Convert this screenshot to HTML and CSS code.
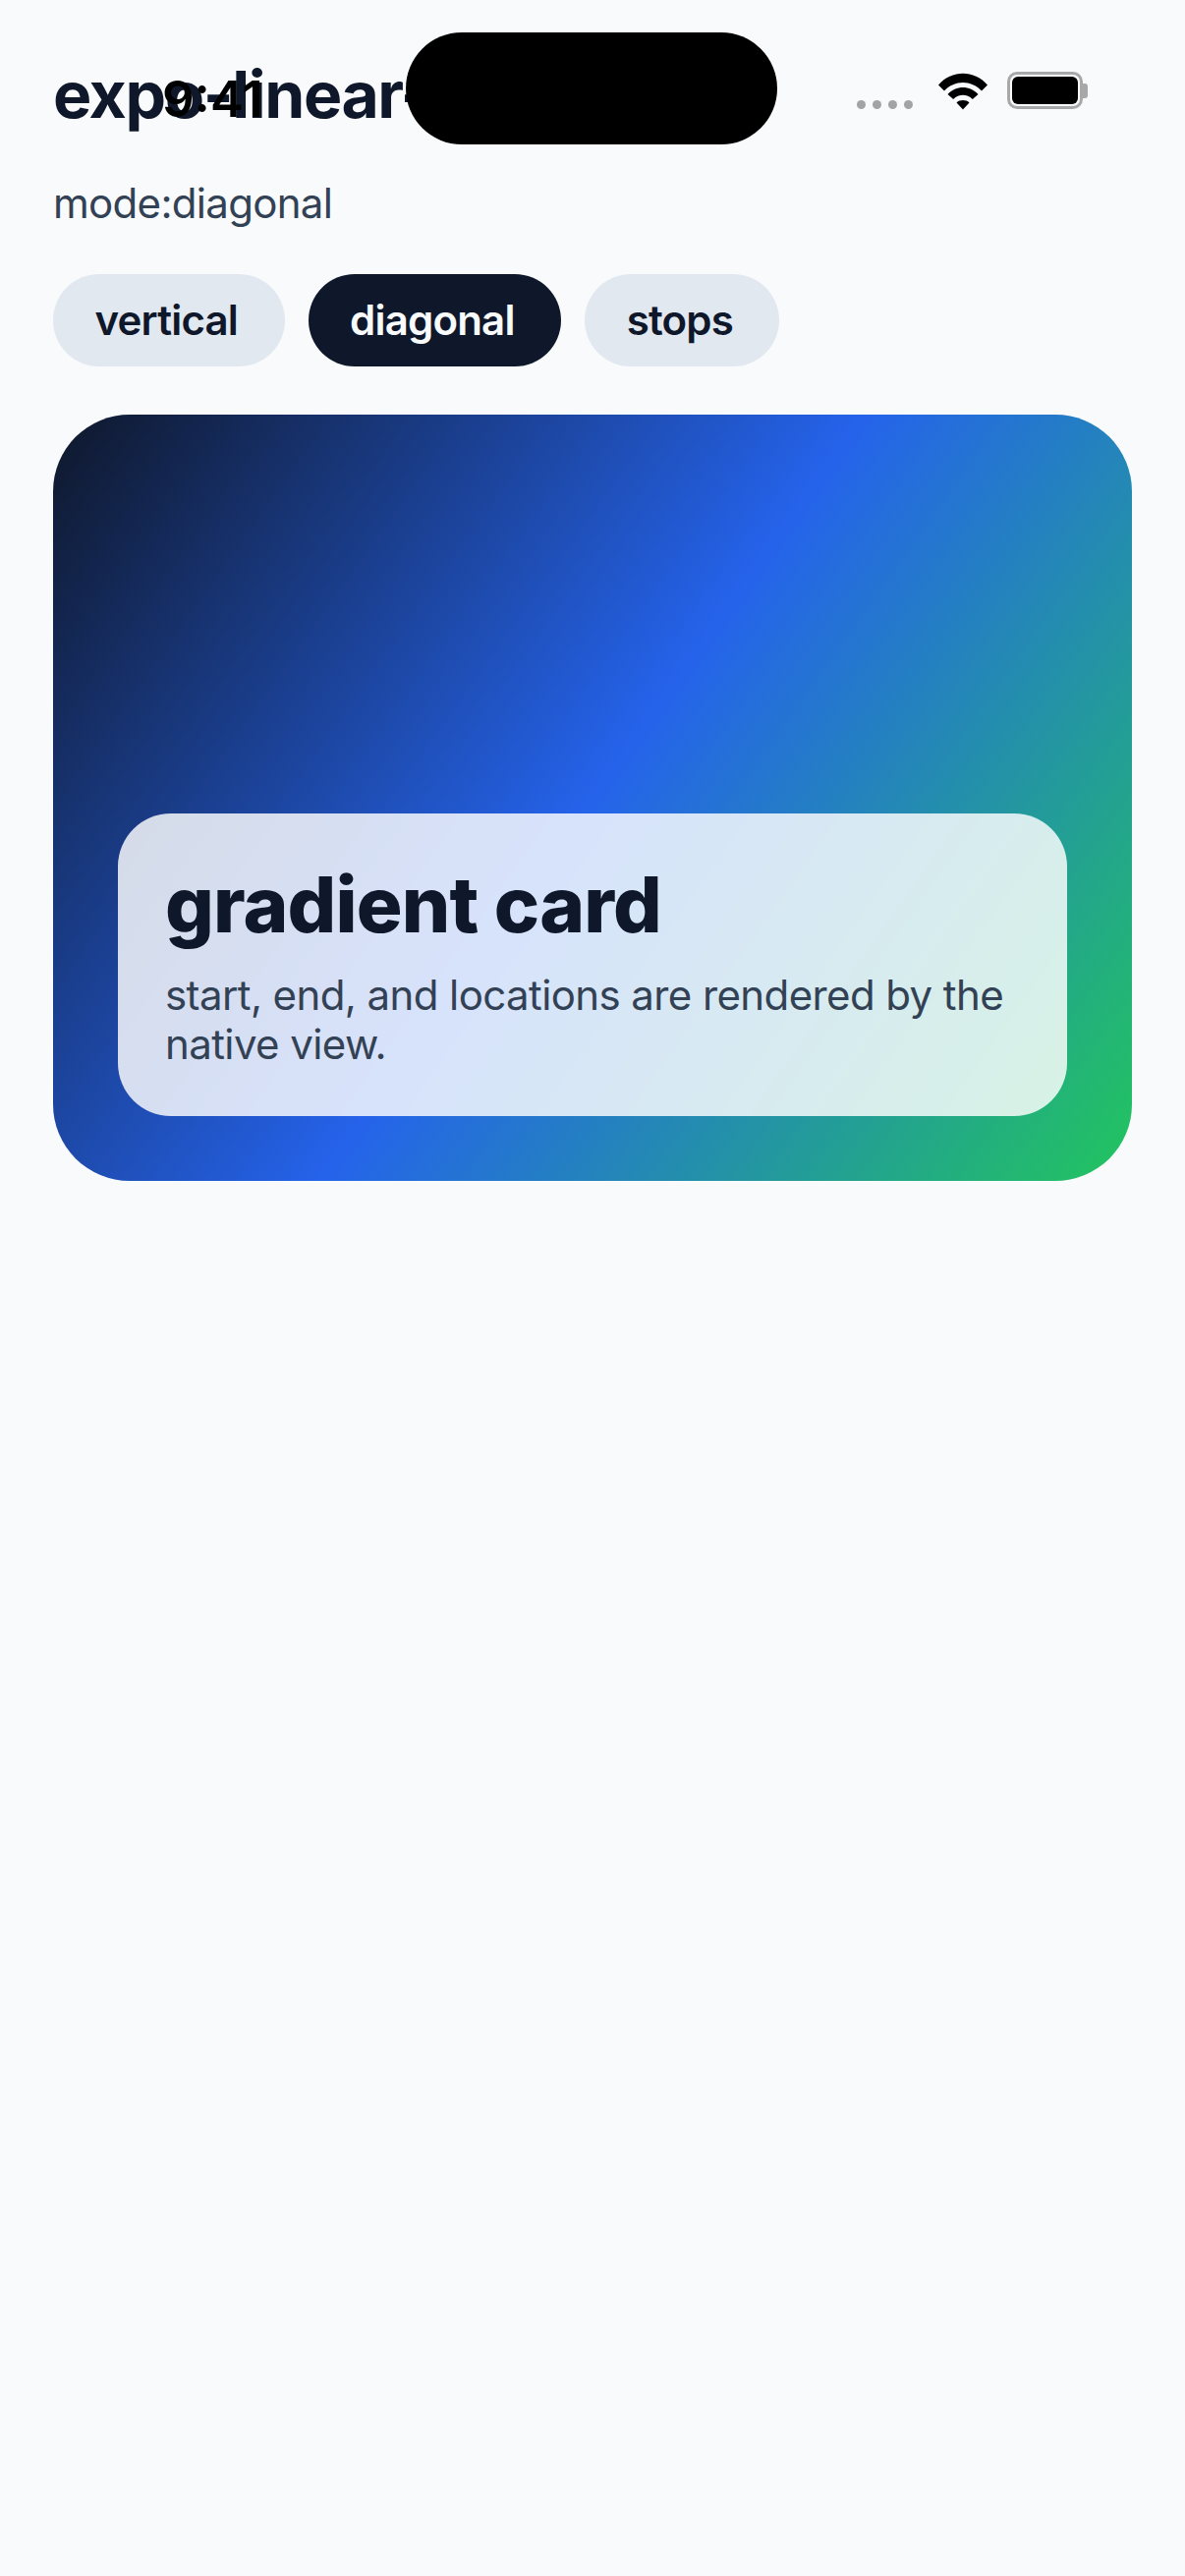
FILE: index.html
```html
<!DOCTYPE html>
<html lang="en">
<head>
<meta charset="utf-8">
<title>expo-linear-gradient</title>
<link rel="stylesheet" href="styles.css">
</head>
<body>
<div class="statusbar">
  <span class="time">9:41</span>
  <div class="island"></div>
  <div class="dots"><i></i><i></i><i></i><i></i></div>
  <svg class="wifi" width="50" height="38" viewBox="0 0 50 38">
    <path d="M0 12.500C13.500 -3.200 36.500 -3.200 50 12.500L44 18.500C33.500 7 16.500 7 6 18.500Z"/>
    <path d="M9.500 22C18 12.800 32 12.800 40.500 22L34.800 27C29 21.400 21 21.400 15.200 27Z"/>
    <path d="M18.500 30.500C22 27.300 28 27.300 31.500 30.500L25 37.500Z"/>
  </svg>
  <div class="battery"><div class="battery-fill"></div></div>
</div>
<main class="screen">
  <h1 class="title">expo-linear-gradient</h1>
  <p class="mode">mode:diagonal</p>
  <div class="pills">
    <span class="pill">vertical</span>
    <span class="pill pill-active">diagonal</span>
    <span class="pill">stops</span>
  </div>
  <section class="gradient">
    <div class="panel">
      <h2 class="panel-title">gradient card</h2>
      <p class="panel-text">start, end, and locations are rendered by the native view.</p>
    </div>
  </section>
</main>
</body>
</html>
```
FILE: styles.css
```css
* { box-sizing: border-box; }
html, body { margin: 0; height: 100%; }
body {
  background: #f8fafc;
  font-family: Inter, "Liberation Sans", sans-serif;
  position: relative;
  overflow: hidden;
}
.statusbar { position: absolute; inset: 0 0 auto 0; height: 160px; z-index: 2; }
.time {
  position: absolute; left: 165px; top: 71px;
  font-size: 51px; line-height: 60px; font-weight: 600; color: #000;
}
.island {
  position: absolute; left: 413px; top: 33px;
  width: 378px; height: 114px; border-radius: 57px; background: #000;
}
.dots { position: absolute; left: 872px; top: 102px; display: flex; gap: 7px; }
.dots i { width: 9px; height: 9px; border-radius: 50%; background: #a3a3a3; }
.wifi { position: absolute; left: 955px; top: 74px; }
.battery {
  position: absolute; left: 1025px; top: 73px; width: 77px; height: 38px;
  border: 3px solid #a8a8a8; border-radius: 10px; padding: 2px;
}
.battery::after {
  content: ""; position: absolute; left: 74px; top: 9px;
  width: 5px; height: 15px; background: #a8a8a8; border-radius: 0 3px 3px 0;
}
.battery-fill { width: 100%; height: 100%; background: #000; border-radius: 6px; }
.screen { padding: 57px 54px 0; }
.title {
  margin: 0; font-size: 66px; line-height: 78px; font-weight: 700; letter-spacing: -1.4px;
  color: #0f172a; white-space: nowrap;
}
.mode { margin: 47px 0 0; font-size: 42px; line-height: 50px; letter-spacing: -0.7px; color: #334155; }
.pills { display: flex; gap: 24px; margin-top: 47px; }
.pill {
  height: 94px; padding: 0 47.5px 0 42.5px; border-radius: 47px; background: #e2e8f0;
  color: #0f172a; font-size: 42px; line-height: 94px; font-weight: 600; letter-spacing: -0.8px;
}
.pill-active { background: #0f172a; color: #f8fafc; }
.gradient {
  margin-top: 49px; height: 780px; border-radius: 78px; padding: 66px;
  display: flex; flex-direction: column; justify-content: flex-end;
  background: linear-gradient(125.4deg, #0f172a 0%, #2563eb 50%, #22c55e 100%);
}
.panel {
  padding: 48px; border-radius: 54px;
  background: rgba(255, 255, 255, 0.82);
}
.panel-title {
  margin: 0; font-size: 78px; line-height: 90px; font-weight: 800; letter-spacing: -0.8px; color: #0f172a;
}
.panel-text { margin: 22px 0 0; font-size: 42px; line-height: 50px; letter-spacing: -0.6px; color: #334155; }
```
